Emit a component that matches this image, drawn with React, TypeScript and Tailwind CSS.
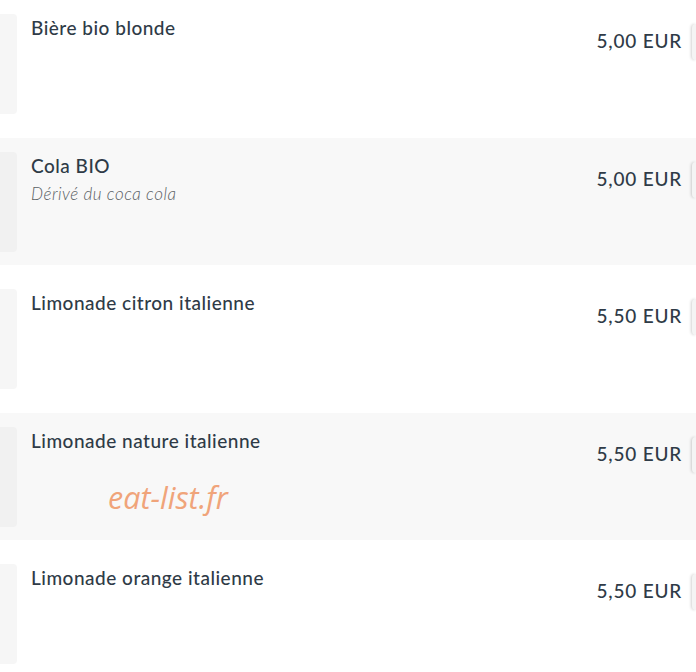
const items = [
  { name: 'Bière bio blonde', price: '5,00 EUR', grey: false },
  { name: 'Cola BIO', desc: 'Dérivé du coca cola', price: '5,00 EUR', grey: true },
  { name: 'Limonade citron italienne', price: '5,50 EUR', grey: false },
  { name: 'Limonade nature italienne', price: '5,50 EUR', grey: true },
  { name: 'Limonade orange italienne', price: '5,50 EUR', grey: false },
];

export default function App() {
  return (
    <div className="relative h-[672px] w-[696px] overflow-hidden bg-white font-['Lato',sans-serif] text-[#2f3b47]">
      <div className="flex flex-col gap-[10.5px]">
        {items.map((item) => (
          <div key={item.name} className={`flex h-[127px] ${item.grey ? 'bg-[#f8f8f8]' : 'bg-white'}`}>
            <div className={`mt-[14px] h-[100px] w-[17px] shrink-0 rounded-r-sm ${item.grey ? 'bg-[#f1f1f1]' : 'bg-[#f6f6f6]'}`} />
            <div className="flex-1 pl-[14px] pt-[16px]">
              <div className="text-[19px] font-medium leading-[24px] tracking-[0.5px]">{item.name}</div>
              {item.desc && (
                <div className="mt-[6px] text-[17px] font-light italic leading-[20px] tracking-[0.5px] text-[#5a5f64]">{item.desc}</div>
              )}
            </div>
            <div className="pr-[10px] pt-[29px] text-[19px] font-medium leading-[24px] tracking-[0.8px]">{item.price}</div>
            <div className="mt-[24px] h-[36px] w-[4px] shrink-0 rounded-l-sm bg-[#f4f4f4] shadow-[-1px_0_3px_rgba(0,0,0,0.18)]" />
          </div>
        ))}
      </div>
      <div className="absolute left-[108px] top-[477px] font-['Open_Sans',sans-serif] text-[30.5px] italic leading-[40px] text-[#f0a47a]">
        eat-list.fr
      </div>
    </div>
  );
}
